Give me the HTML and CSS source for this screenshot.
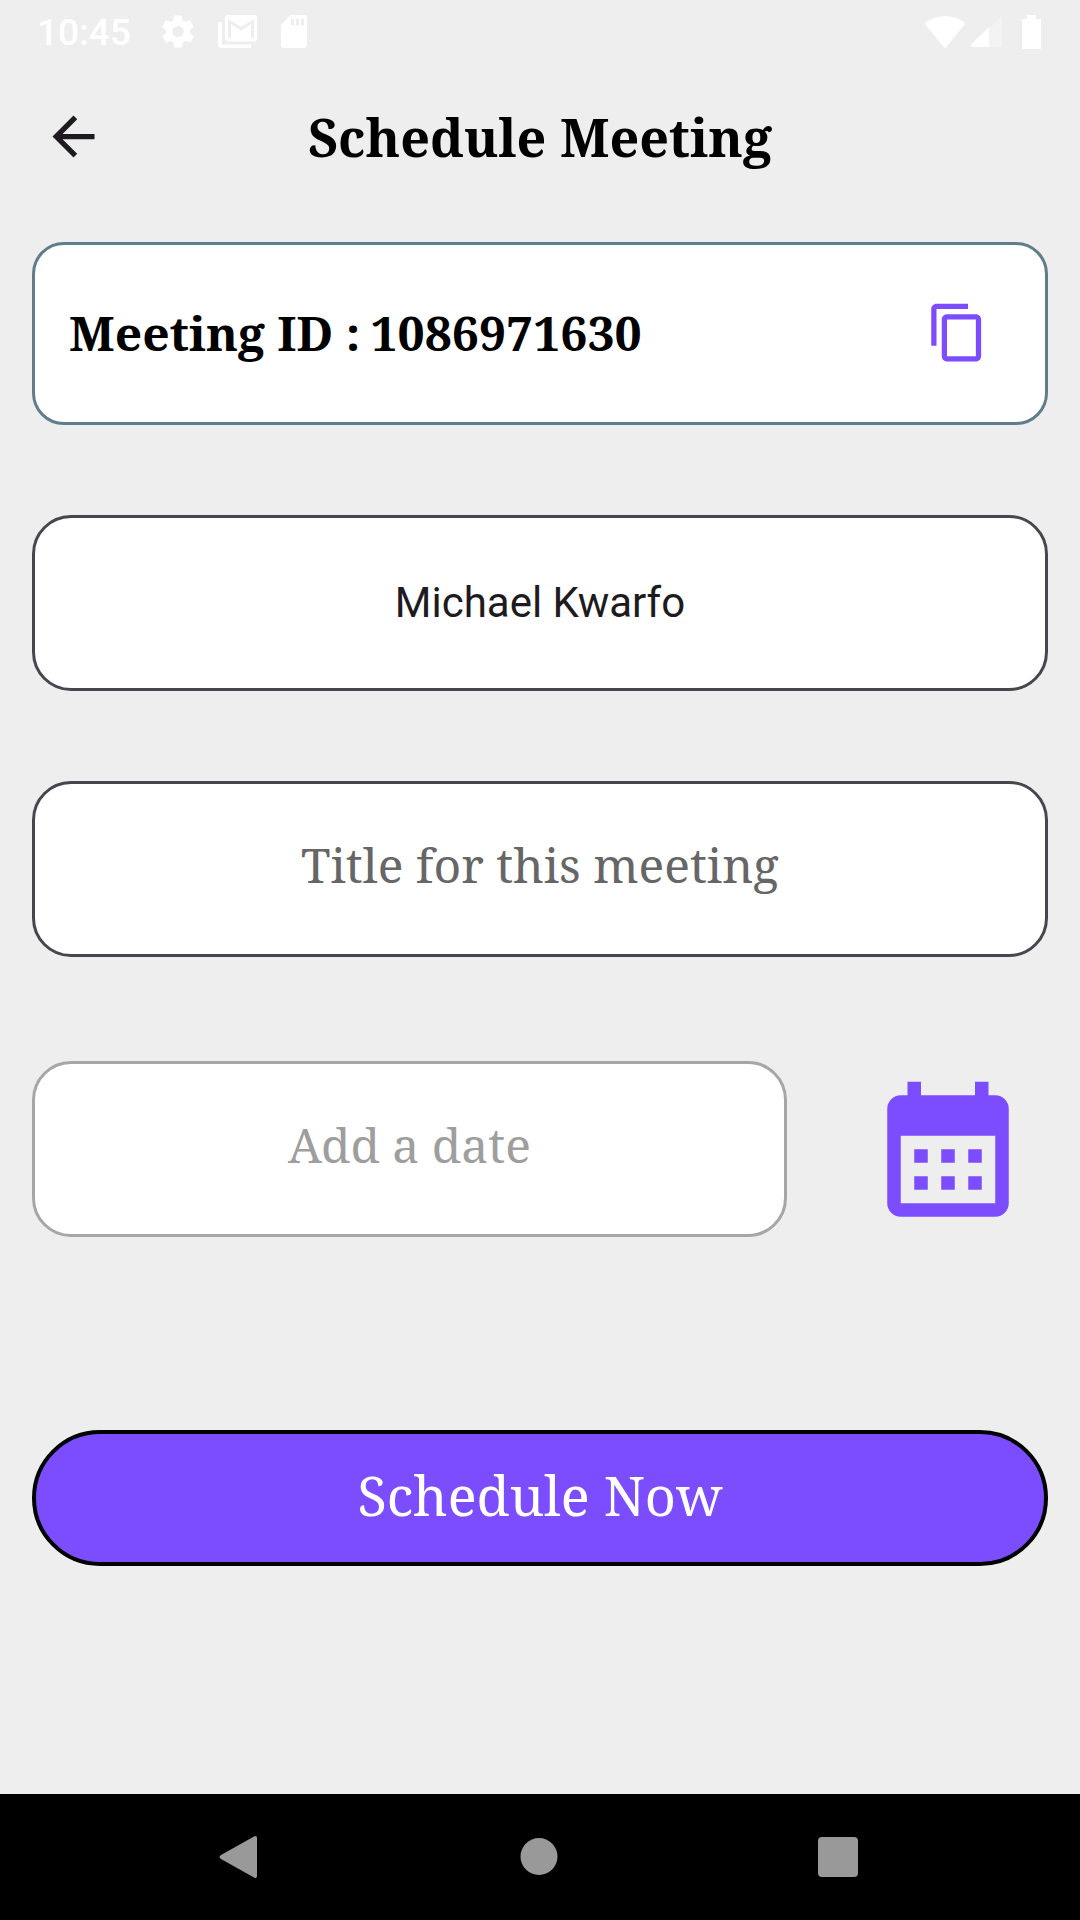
FILE: index.html
```html
<!DOCTYPE html>
<html lang="en">
<head>
<meta charset="utf-8">
<meta name="viewport" content="width=device-width, initial-scale=1">
<title>Schedule Meeting</title>
<link rel="stylesheet" href="styles.css">
</head>
<body>
<div class="screen">
  <div class="status">
    <div class="status-left">
      <span class="clock">10:45</span>
      <svg class="gear" viewBox="2 2 20 20" aria-hidden="true"><path fill="currentColor" d="M19.4 13c.1-.3.1-.7.1-1s0-.7-.1-1l2.1-1.6c.2-.2.3-.4.1-.7l-2-3.400c-.1-.2-.4-.3-.6-.2l-2.500 1c-.5-.4-1.100-.7-1.700-1l-.4-2.600c0-.3-.2-.5-.5-.5h-4c-.3 0-.5.2-.5.5l-.4 2.600c-.6.3-1.200.6-1.700 1l-2.500-1c-.2-.1-.5 0-.6.2l-2 3.400c-.1.300 0 .500.100.700L4.600 11c-.1.300-.1.700-.1 1s0 .7.100 1l-2.100 1.600c-.2.200-.3.400-.1.700l2 3.400c.1.200.4.300.6.200l2.500-1c.5.400 1.100.7 1.700 1l.4 2.600c0 .300.200.500.500.500h4c.3 0 .5-.2.500-.5l.4-2.600c.6-.3 1.200-.6 1.700-1l2.500 1c.2.100.5 0 .6-.2l2-3.400c.1-.3.100-.5-.1-.7zM12 15.500a3.500 3.500 0 1 1 0-7 3.500 3.500 0 0 1 0 7z"/></svg>
      <svg class="mail" viewBox="0 0 39 33" aria-hidden="true"><path fill="currentColor" d="M0 7h4v22.500h29V33H3q-3 0-3-3z"/><path fill="currentColor" fill-rule="evenodd" d="M10 0h26q3 0 3 3v20.500q0 3-3 3H10q-3 0-3-3V3q0-3 3-3zm0 4v19h3V9l10 6.500L33 9v14h3V4l-13 8z"/></svg>
      <svg class="sd" viewBox="0 0 26 33" aria-hidden="true"><path fill="currentColor" fill-rule="evenodd" d="M9.500 0H23q3 0 3 3v27q0 3-3 3H3q-3 0-3-3V10zM10 4v6.500h3V4zm5 0v6.500h3V4zm5 0v6.500h3V4z"/></svg>
    </div>
    <div class="status-right">
      <svg class="wifi" viewBox="0 0 40 32" aria-hidden="true"><path fill="currentColor" d="M1 6Q20-6 39 6q1.500 1 .5 2.500L21.500 31q-1.500 1.500-3 0L.500 8.500Q-.5 7 1 6z"/></svg>
      <svg class="signal" viewBox="0 0 31 31" aria-hidden="true"><path fill="#f3f3f3" d="M18 13L31 0v30q0 1-1 1H18z"/><path fill="currentColor" d="M18 11v20H1q-2-1-.5-3z"/></svg>
      <svg class="battery" viewBox="0 0 19 34" aria-hidden="true"><path fill="currentColor" d="M5 0h9v4h4q1 0 1 1v28q0 1-1 1H1q-1 0-1-1V5q0-1 1-1h4z"/></svg>
    </div>
  </div>

  <header class="appbar">
    <button class="icon-btn" type="button" aria-label="Back">
      <svg class="icon" viewBox="0 0 24 24" aria-hidden="true"><path fill="#1d1b20" d="M20 11H7.830l5.590-5.590L12 4l-8 8 8 8 1.410-1.410L7.830 13H20z"/></svg>
    </button>
    <h1 class="title">Schedule Meeting</h1>
  </header>

  <main class="content">
    <section class="id-card">
      <p class="id-text"><span>Meeting ID :</span><span>1086971630</span></p>
      <button class="icon-btn" type="button" aria-label="Copy meeting ID">
        <svg class="icon" viewBox="0 0 24 24" aria-hidden="true"><path fill="#7c4dff" d="M16 1H4c-1.100 0-2 .9-2 2v14h2V3h12zm3 4H8c-1.100 0-2 .9-2 2v14c0 1.100.9 2 2 2h11c1.100 0 2-.9 2-2V7c0-1.100-.9-2-2-2zm0 16H8V7h11z"/></svg>
      </button>
    </section>

    <form class="form">
      <input class="field field-name" type="text" value="Michael Kwarfo" aria-label="Name">
      <input class="field" type="text" placeholder="Title for this meeting" aria-label="Meeting title">
      <div class="date-row">
        <input class="field field-date" type="text" placeholder="Add a date" aria-label="Date" disabled>
        <button class="icon-btn" type="button" aria-label="Pick a date">
          <svg class="calendar" viewBox="0 0 24 24" aria-hidden="true"><path fill="#7c4dff" fill-rule="evenodd" d="M6 1h2v2h8V1h2v2h1a2 2 0 0 1 2 2v14a2 2 0 0 1-2 2H5a2 2 0 0 1-2-2V5a2 2 0 0 1 2-2h1zM5 9v10h14V9zm2 2h2v2H7zm4 0h2v2h-2zm4 0h2v2h-2zm-8 4h2v2H7zm4 0h2v2h-2zm4 0h2v2h-2z"/></svg>
        </button>
      </div>
      <button class="submit" type="button">Schedule Now</button>
    </form>
  </main>

  <nav class="navbar">
    <button class="icon-btn" type="button" aria-label="Back"><svg class="nav-icon" viewBox="0 0 42 42" aria-hidden="true"><path fill="#999" d="M36 .5q3-1.500 3 1.500v38q0 3-3 1.500L3 23q-3-2 0-4z"/></svg></button>
    <button class="icon-btn" type="button" aria-label="Home"><svg class="nav-icon" viewBox="0 0 42 42" aria-hidden="true"><circle cx="21" cy="20.500" r="18.500" fill="#999"/></svg></button>
    <button class="icon-btn" type="button" aria-label="Overview"><svg class="nav-icon" viewBox="0 0 42 42" aria-hidden="true"><rect x="0" y="1" width="40" height="40" rx="4" fill="#999"/></svg></button>
  </nav>
</div>
</body>
</html>
```
FILE: styles.css
```css
* {
  box-sizing: border-box;
}

body {
  margin: 0;
  background: #eee;
  color: #000;
  font-family: "Noto Serif", "Droid Serif", "DejaVu Serif", serif;
}

.screen {
  display: flex;
  flex-direction: column;
  min-height: 100vh;
}

.status {
  display: flex;
  justify-content: space-between;
  align-items: center;
  height: 63px;
  padding: 0 39px 0 37px;
  color: #fff;
}

.status-left,
.status-right {
  display: flex;
  align-items: center;
}

.status-left {
  gap: 24px;
}

.status-right {
  gap: 6px;
}

.clock {
  margin-right: 7px;
  padding-top: 2px;
  font: 500 37px/44px Roboto, sans-serif;
}

.gear {
  width: 32px;
  height: 33px;
}

.mail {
  width: 39px;
  height: 33px;
}

.sd {
  width: 26px;
  height: 33px;
}

.wifi {
  width: 40px;
  height: 32px;
}

.signal {
  width: 31px;
  height: 31px;
}

.battery {
  width: 19px;
  height: 34px;
  margin-left: 14px;
}

.icon-btn {
  display: flex;
  padding: 0;
  border: 0;
  background: none;
}

.icon {
  width: 63px;
  height: 63px;
}

.appbar {
  display: grid;
  grid-template-columns: 63px 1fr 63px;
  align-items: center;
  height: 147px;
  padding: 0 42px;
}

.title {
  margin: 0;
  text-align: center;
  font-size: 52px;
  line-height: 72px;
}

.content {
  flex: 1;
  padding: 32px;
}

.id-card {
  display: flex;
  justify-content: space-between;
  align-items: center;
  height: 183px;
  margin-bottom: 90px;
  padding: 0 56px 2px 34px;
  border: 3px solid #607d8b;
  border-radius: 32px;
  background: #fff;
}

.id-text {
  display: flex;
  gap: 10px;
  margin: 0;
  font-size: 48px;
  font-weight: 700;
  line-height: 64px;
}

.form {
  display: flex;
  flex-direction: column;
  gap: 90px;
}

.field {
  width: 100%;
  height: 176px;
  padding: 0 36px 10px;
  border: 3px solid #49454f;
  border-radius: 39px;
  background: #fff;
  color: #1d1b20;
  font-family: inherit;
  font-size: 48px;
  text-align: center;
}

.field::placeholder {
  color: #666;
  opacity: 1;
}

.field-name {
  padding-bottom: 2px;
  font-family: Roboto, sans-serif;
  font-size: 42px;
}

.date-row {
  display: grid;
  grid-template-columns: 1fr 162px;
  gap: 80px;
  align-items: center;
  margin: 14px 0 103px;
  padding-right: 19px;
}

.date-row .icon-btn {
  padding-top: 14px;
}

.field-date {
  border-color: #a6a6a6;
}

.field-date::placeholder {
  color: #9e9e9e;
}

.calendar {
  width: 162px;
  height: 162px;
}

.submit {
  height: 136px;
  padding: 0 0 6px;
  border: 4px solid #000;
  border-radius: 68px;
  background: #7c4dff;
  color: #fff;
  font-family: inherit;
  font-size: 54px;
}

.navbar {
  display: flex;
  justify-content: space-around;
  align-items: center;
  height: 126px;
  padding: 0 91px 0 89px;
  background: #000;
}

.nav-icon {
  width: 42px;
  height: 42px;
}
```
